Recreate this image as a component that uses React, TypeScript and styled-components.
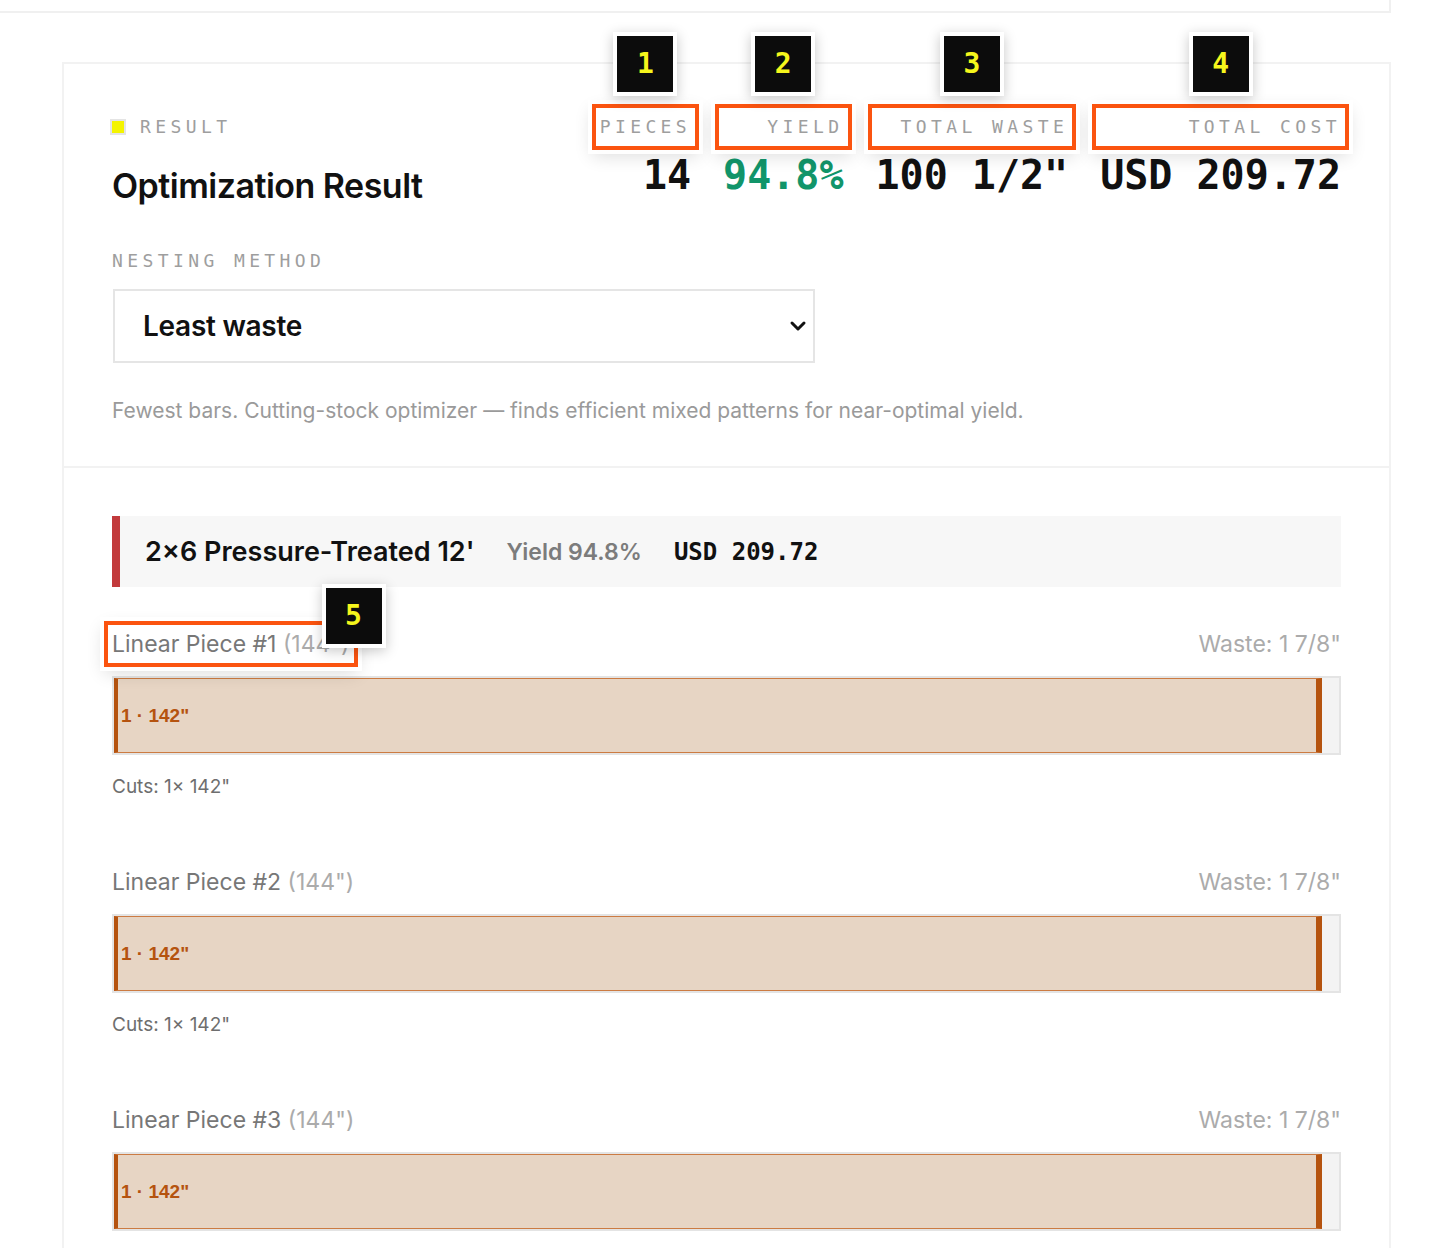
import styled, { createGlobalStyle } from "styled-components";

const GlobalStyle = createGlobalStyle`
  body {
    margin: 0;
    background: #ffffff;
    font-family: Inter, "Noto Sans", "Liberation Sans", sans-serif;
    color: #111111;
  }
`;

const MONO = `"DejaVu Sans Mono", "Liberation Mono", monospace`;

const Page = styled.div`
  width: 1391px;
  padding-bottom: 80px;
`;

const TopStub = styled.div`
  height: 11px;
  border-right: 2px solid #f0f0f0;
  border-bottom: 2px solid #f0f0f0;
`;

const Card = styled.div`
  margin: 49px 0 0 62px;
  border: 2px solid #f2f2f2;
  background: #ffffff;
`;

const HeaderSection = styled.section`
  padding: 48px 48px 40px;
  border-bottom: 2px solid #f2f2f2;
`;

const HeaderRow = styled.div`
  display: flex;
  justify-content: space-between;
  align-items: flex-start;
`;

const Eyebrow = styled.div`
  display: flex;
  align-items: center;
  gap: 14px;
  height: 30px;
  margin-left: -2px;
`;

const Swatch = styled.span`
  width: 12px;
  height: 12px;
  background: #f4f400;
  border: 2px solid #e4e4e4;
`;

const MonoLabel = styled.div`
  font-family: ${MONO};
  font-size: 18px;
  letter-spacing: 4.4px;
  color: #9e9e9e;
  line-height: 30px;
  white-space: nowrap;
`;

const Title = styled.h1`
  margin: 22px 0 0;
  font-size: 34px;
  font-weight: 600;
  letter-spacing: -0.015em;
  line-height: 44px;
`;

const Stats = styled.div`
  display: flex;
  gap: 32px;
`;

const Stat = styled.div`
  display: flex;
  flex-direction: column;
  text-align: right;
`;

const StatLabel = styled(MonoLabel)`
  position: relative;
`;

const StatValue = styled.div<{ $color?: string }>`
  margin-top: 11px;
  font-family: ${MONO};
  font-size: 40px;
  font-weight: 700;
  line-height: 44px;
  color: ${(p) => p.$color || "#111111"};
  white-space: nowrap;
`;

const NestingLabel = styled(MonoLabel)`
  margin-top: 38px;
`;

const SelectWrap = styled.div`
  position: relative;
  margin: 13px 0 0 1px;
  width: 702px;
  height: 74px;
  box-sizing: border-box;
  border: 2px solid #e5e5e5;
`;

const Select = styled.select`
  appearance: none;
  width: 100%;
  height: 100%;
  border: none;
  background: transparent;
  padding: 0 60px 0 28px;
  font-family: Inter, "Noto Sans", sans-serif;
  font-size: 28px;
  font-weight: 600;
  letter-spacing: -0.01em;
  color: #111111;
  outline: none;
`;

const Chevron = styled.svg`
  position: absolute;
  right: 6px;
  top: 50%;
  transform: translateY(-50%);
  pointer-events: none;
`;

const Description = styled.p`
  margin: 33px 0 0;
  font-size: 21px;
  line-height: 30px;
  color: #9a9a9a;
`;

const BodySection = styled.section`
  padding: 48px;
`;

const GroupHeader = styled.div`
  display: flex;
  align-items: center;
  gap: 32px;
  height: 71px;
  box-sizing: border-box;
  padding-left: 25px;
  background: #f7f7f7;
  border-left: 8px solid #c23a3c;
`;

const GroupTitle = styled.div`
  font-size: 27px;
  font-weight: 600;
`;

const GroupYield = styled.div`
  font-size: 23px;
  font-weight: 600;
  color: #7c7c7c;
`;

const GroupCost = styled.div`
  font-family: ${MONO};
  font-size: 24px;
  font-weight: 700;
`;

const PieceList = styled.div`
  display: flex;
  flex-direction: column;
  gap: 67px;
  margin-top: 42px;
`;

const PieceHead = styled.div`
  display: flex;
  justify-content: space-between;
  font-size: 23px;
  line-height: 30px;
`;

const PieceTitle = styled.span`
  position: relative;
  color: #777777;
`;

const Muted = styled.span`
  color: #ababab;
`;

const Bar = styled.div`
  display: flex;
  margin-top: 17px;
  height: 79px;
  box-sizing: border-box;
  border: 2px solid #e4e4e4;
  background: #f3f3f3;
`;

const Segment = styled.div`
  display: flex;
  align-items: center;
  height: 100%;
  box-sizing: border-box;
  padding-left: 3px;
  background: #e7d5c4;
  border: 1px solid #cc7b42;
  border-left: 4px solid #b5530f;
  border-right: 6px solid #b5530f;
  font-size: 19px;
  font-weight: 700;
  color: #b5530f;
  font-family: "Liberation Sans", Arial, sans-serif;
`;

const Cuts = styled.div`
  margin-top: 19px;
  font-size: 19px;
  line-height: 26px;
  color: #6e6e6e;
`;

const Outline = styled.span`
  position: absolute;
  inset: -8px;
  border: 4px solid #fb5410;
  box-shadow: 0 0 0 4px rgba(255, 255, 255, 0.95), 0 6px 18px rgba(0, 0, 0, 0.14);
  pointer-events: none;
  z-index: 1;
`;

const Badge = styled.span<{ $mode: "above" | "corner" }>`
  position: absolute;
  z-index: 2;
  width: 56px;
  height: 56px;
  display: flex;
  align-items: center;
  justify-content: center;
  background: #0c0c0c;
  border: 4px solid #ffffff;
  box-shadow: 0 3px 12px rgba(0, 0, 0, 0.22);
  font-family: ${MONO};
  font-size: 28px;
  font-weight: 700;
  letter-spacing: 0;
  color: #f6f61c;
  ${(p) =>
    p.$mode === "above"
      ? `left: 50%; bottom: calc(100% + 16px); transform: translateX(-50%);`
      : `right: -36px; top: -45px;`}
`;

const stats = [
  { label: "PIECES", value: "14" },
  { label: "YIELD", value: "94.8%", color: "#11956a" },
  { label: "TOTAL WASTE", value: '100 1/2"' },
  { label: "TOTAL COST", value: "USD 209.72" },
];

const pieces = [1, 2, 3, 4];

export default function App() {
  const stock = 144;
  const cut = 142;
  return (
    <>
      <GlobalStyle />
      <Page>
        <TopStub />
        <Card>
          <HeaderSection>
            <HeaderRow>
              <div>
                <Eyebrow>
                  <Swatch />
                  <MonoLabel>RESULT</MonoLabel>
                </Eyebrow>
                <Title>Optimization Result</Title>
              </div>
              <Stats>
                {stats.map((s, i) => (
                  <Stat key={s.label}>
                    <StatLabel>
                      {s.label}
                      <Outline />
                      <Badge $mode="above">{i + 1}</Badge>
                    </StatLabel>
                    <StatValue $color={s.color}>{s.value}</StatValue>
                  </Stat>
                ))}
              </Stats>
            </HeaderRow>

            <NestingLabel>NESTING METHOD</NestingLabel>
            <SelectWrap>
              <Select defaultValue="least">
                <option value="least">Least waste</option>
                <option value="fast">Fastest</option>
              </Select>
              <Chevron width="18" height="18" viewBox="0 0 18 18">
                <polyline
                  points="3,6 9,12 15,6"
                  fill="none"
                  stroke="#111"
                  strokeWidth="3"
                  strokeLinecap="round"
                  strokeLinejoin="round"
                />
              </Chevron>
            </SelectWrap>
            <Description>
              Fewest bars. Cutting-stock optimizer — finds efficient mixed
              patterns for near-optimal yield.
            </Description>
          </HeaderSection>

          <BodySection>
            <GroupHeader>
              <GroupTitle>2×6 Pressure-Treated 12'</GroupTitle>
              <GroupYield>Yield 94.8%</GroupYield>
              <GroupCost>USD 209.72</GroupCost>
            </GroupHeader>

            <PieceList>
              {pieces.map((n) => (
                <div key={n}>
                  <PieceHead>
                    <PieceTitle>
                      Linear Piece #{n} <Muted>(144")</Muted>
                      {n === 1 && (
                        <>
                          <Outline />
                          <Badge $mode="corner">5</Badge>
                        </>
                      )}
                    </PieceTitle>
                    <Muted>Waste: 1 7/8"</Muted>
                  </PieceHead>
                  <Bar>
                    <Segment style={{ width: `${(cut / stock) * 100}%` }}>
                      1 · 142"
                    </Segment>
                  </Bar>
                  <Cuts>Cuts: 1× 142"</Cuts>
                </div>
              ))}
            </PieceList>
          </BodySection>
        </Card>
      </Page>
    </>
  );
}
